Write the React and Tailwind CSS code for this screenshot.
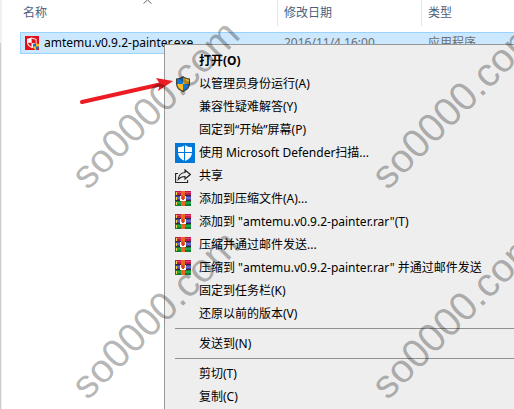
import React from "react";
import clsx from "clsx";

const menuGroups = [
  [
    { label: "打开(O)", bold: true },
    { label: "以管理员身份运行(A)", icon: UacShield },
    { label: "兼容性疑难解答(Y)" },
    { label: "固定到“开始”屏幕(P)" },
    { label: "使用 Microsoft Defender扫描...", icon: DefenderIcon },
    { label: "共享", icon: ShareIcon },
    { label: "添加到压缩文件(A)...", icon: RarIcon },
    { label: '添加到 "amtemu.v0.9.2-painter.rar"(T)', icon: RarIcon },
    { label: "压缩并通过邮件发送...", icon: RarIcon },
    { label: '压缩到 "amtemu.v0.9.2-painter.rar" 并通过邮件发送', icon: RarIcon },
    { label: "固定到任务栏(K)" },
    { label: "还原以前的版本(V)" },
  ],
  [{ label: "发送到(N)" }],
  [{ label: "剪切(T)" }, { label: "复制(C)" }],
];

export default function App() {
  return (
    <div className="relative flex min-h-screen overflow-hidden bg-white font-['Noto_Sans','Noto_Sans_CJK_SC',sans-serif] text-xs">
      <div className="flex w-[2px] flex-col bg-[#f0f0f0]">
        <div className="mt-[43px] w-px flex-1 bg-[#cdcdcd]" />
      </div>
      <FileList />
      <ContextMenu />
      <Arrow />
      <Watermark className="left-[46px] top-[80px]" />
      <Watermark className="left-[346px] top-[80px]" />
      <Watermark className="left-[46px] top-[290px]" />
      <Watermark className="left-[346px] top-[290px]" />
    </div>
  );
}

function FileList() {
  return (
    <div className="min-w-0 flex-1 pl-[18px]">
      <table className="w-full table-fixed border-separate border-spacing-0 text-left whitespace-nowrap">
        <thead className="text-[#4c607a]">
          <tr className="h-[26px]">
            <th className="relative w-[258px] border-r border-[#e5e5e5] p-0 pl-[3px] font-normal">
              名称
              <svg
                className="absolute left-[123px] top-0 h-1 w-[9px]"
                viewBox="0 0 9 4"
                fill="none"
                stroke="#666"
                aria-hidden="true"
              >
                <path d="M.5 3.5 4.5 0l4 3.5" />
              </svg>
            </th>
            <th className="w-36 border-r border-[#e5e5e5] p-0 pl-1.5 font-normal">修改日期</th>
            <th className="p-0 pl-1.5 font-normal">类型</th>
          </tr>
        </thead>
        <tbody>
          <tr aria-hidden="true">
            <td className="h-1.5 p-0" colSpan={3} />
          </tr>
          <tr className="h-[22px] bg-[#cce8ff] text-[#6d6d6d]">
            <td className="border-y border-l border-[#99d1ff] p-0 pl-1 text-black">
              <div className="flex items-center gap-[5px]">
                <AppIcon />
                amtemu.v0.9.2-painter.exe
              </div>
            </td>
            <td className="border-y border-[#99d1ff] p-0 pl-1.5">2016/11/4 16:00</td>
            <td className="border-y border-[#99d1ff] p-0 pl-1.5">应用程序</td>
          </tr>
        </tbody>
      </table>
    </div>
  );
}

function ContextMenu() {
  return (
    <div
      role="menu"
      className="absolute top-11 right-0 bottom-0 left-[164px] overflow-hidden border-t border-l border-[#979797] bg-[#eeeeee] pt-1 pl-2.5"
    >
      {menuGroups.map((items, i) => (
        <div key={i}>
          {i > 0 && <hr className="my-[3px] border-[#919191]" />}
          {items.map((item) => (
            <MenuItem key={item.label} {...item} />
          ))}
        </div>
      ))}
    </div>
  );
}

function MenuItem({ label, icon: Icon, bold }) {
  return (
    <button
      type="button"
      role="menuitem"
      className={clsx(
        "flex h-[23px] w-full items-center text-left whitespace-nowrap text-black",
        bold && "font-bold"
      )}
    >
      <span className="w-6 shrink-0">{Icon && <Icon />}</span>
      {label}
    </button>
  );
}

function Watermark({ className }) {
  return (
    <div
      aria-hidden="true"
      className={clsx(
        "pointer-events-none absolute -rotate-[45deg] font-['Liberation_Sans',sans-serif] text-[40px] leading-[48px] text-black/30",
        className
      )}
    >
      so0000.com
    </div>
  );
}

function Arrow() {
  return (
    <svg
      className="pointer-events-none absolute left-[78px] top-[74px] h-8 w-[98px]"
      viewBox="0 0 98 32"
      aria-hidden="true"
    >
      <path d="M4 28 84 10" stroke="#ed1c24" strokeWidth="4" strokeLinecap="round" />
      <path d="M95 7 78 4l4 6-2 7z" fill="#ed1c24" />
    </svg>
  );
}

function AppIcon() {
  return (
    <svg className="h-[14px] w-[14px]" viewBox="0 0 14 14" aria-hidden="true">
      <path fill="#e3101c" d="M0 0h14v14H0z" />
      <path fill="#fff" d="M2 3 6.500 1.500 11.500 3v4c0 2.500-2 4-4.500 5C4 11 2 9 2 6.500z" />
      <path fill="#e3101c" d="M6.500 2.500 10.700 3.800v3.400H6.800zM3 6.800h3.500v3.900C4.600 9.900 3.200 8.600 3 6.800z" />
      <path fill="#1b6fc9" d="M8 8.200 11 7l3 1.200v2.300c0 1.700-1.200 2.800-3 3.500-1.800-.7-3-1.800-3-3.500z" />
      <path fill="#f9b916" d="M11 7l3 1.200v2.300h-3zM8 10.500h3V14c-1.800-.7-3-1.800-3-3.500z" />
    </svg>
  );
}

function UacShield() {
  return (
    <svg className="ml-px h-4 w-[14px]" viewBox="0 0 14 16" aria-hidden="true">
      <path
        fill="#45433d"
        d="M7 0c1.800 1.500 4.200 2.300 7 2.400v5C14 11.500 11.500 14.300 7 16 2.500 14.300 0 11.500 0 7.400v-5C2.800 2.300 5.200 1.500 7 0z"
      />
      <path fill="#0f78d7" d="M7 1.500V8H1.200V3.400C3.500 3.200 5.400 2.600 7 1.500z" />
      <path fill="#fdbb1d" d="M7 1.500V8h5.800V3.400C10.500 3.200 8.600 2.600 7 1.500z" />
      <path fill="#fdbb1d" d="M1.200 8H7v6.700C3.500 13.300 1.400 11.200 1.200 8z" />
      <path fill="#0f78d7" d="M12.800 8H7v6.700c3.500-1.400 5.600-3.500 5.800-6.700z" />
    </svg>
  );
}

function DefenderIcon() {
  return (
    <svg className="h-5 w-5" viewBox="0 0 20 20" aria-hidden="true">
      <path fill="#0078d7" d="M0 0h20v20H0z" />
      <path
        fill="#fff"
        d="M10 2c2 1.500 4.300 2.200 7 2.300V9c0 4.500-2.500 7.300-7 9-4.500-1.700-7-4.500-7-9V4.300C5.700 4.200 8 3.500 10 2z"
      />
      <path stroke="#0078d7" d="M9.500 1v18M2 9.500h16" />
    </svg>
  );
}

function ShareIcon() {
  return (
    <svg
      className="h-4 w-4"
      viewBox="0 0 16 16"
      fill="none"
      stroke="#222"
      strokeWidth="1.100"
      aria-hidden="true"
    >
      <path d="M3 5.500H.6v9h12V12" />
      <path d="M10 2l5.300 4.500L10 11V8.500c-3 0-5 .8-6.800 3C3.500 7.500 6 4.800 10 4.500z" />
    </svg>
  );
}

function RarIcon() {
  return (
    <svg className="h-[15px] w-4" viewBox="0 0 16 15" shapeRendering="crispEdges" aria-hidden="true">
      <path fill="#c2184f" d="M0 0h16v5H0z" />
      <path fill="#e0426f" d="M1 1h15v1H1z" />
      <path fill="#3f43a8" d="M0 5h16v5H0z" />
      <path fill="#6569cc" d="M1 6h15v2H1z" />
      <path fill="#0f7d34" d="M0 10h16v5H0z" />
      <path fill="#23a64c" d="M1 11h15v2H1z" />
      <path fill="#3a2633" d="M0 4h16v1H0zM0 9h16v1H0z" />
      <path fill="#f5d33c" d="M1 1h1v3H1zM1 6h1v3H1zM1 11h1v3H1z" />
      <path fill="#e8691b" d="M6 0h4v15H6z" />
      <path fill="#fff" d="M5 5h1v5H5zM10 5h1v5h-1zM6 8h4v2H6z" />
      <path fill="#e03a2a" d="M7 5h2v4H7z" />
    </svg>
  );
}
